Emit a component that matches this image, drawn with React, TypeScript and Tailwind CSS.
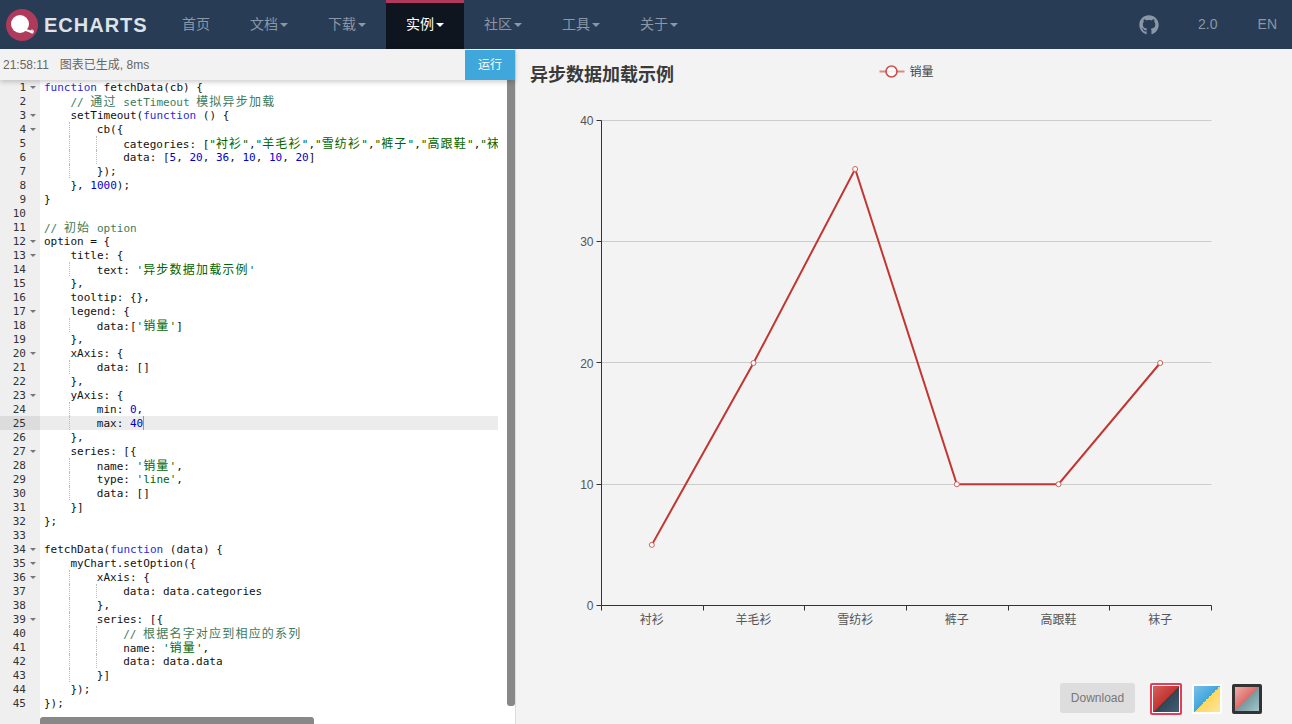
import { Fragment } from "react";
import { FaGithub } from "react-icons/fa";

const code = `function fetchData(cb) {
    // 通过 setTimeout 模拟异步加载
    setTimeout(function () {
        cb({
            categories: ["衬衫","羊毛衫","雪纺衫","裤子","高跟鞋","袜子"],
            data: [5, 20, 36, 10, 10, 20]
        });
    }, 1000);
}

// 初始 option
option = {
    title: {
        text: '异步数据加载示例'
    },
    tooltip: {},
    legend: {
        data:['销量']
    },
    xAxis: {
        data: []
    },
    yAxis: {
        min: 0,
        max: 40
    },
    series: [{
        name: '销量',
        type: 'line',
        data: []
    }]
};

fetchData(function (data) {
    myChart.setOption({
        xAxis: {
            data: data.categories
        },
        series: [{
            // 根据名字对应到相应的系列
            name: '销量',
            data: data.data
        }]
    });
});`.split("\n");

const foldLines = [1, 3, 4, 12, 13, 17, 20, 23, 27, 34, 35, 36, 39];
const activeLine = 25;

const navItems = [
  { label: "首页", caret: false },
  { label: "文档", caret: true },
  { label: "下载", caret: true },
  { label: "实例", caret: true, active: true },
  { label: "社区", caret: true },
  { label: "工具", caret: true },
  { label: "关于", caret: true },
];

const sansFont = "font-['Liberation_Sans','Noto_Sans_CJK_SC',sans-serif]";
const chartFont = "Liberation Sans, Noto Sans CJK SC, sans-serif";

// CJK cells are two columns wide in the editor
function Cells({ text }: { text: string }) {
  const parts = text.split(/([\u4e00-\u9fff]+)/);
  return (
    <>
      {parts.map((p, i) =>
        i % 2 === 1 ? (
          <span key={i} className="text-[12px] tracking-[1.2px]">
            {p}
          </span>
        ) : (
          <Fragment key={i}>{p}</Fragment>
        )
      )}
    </>
  );
}

function CodeText({ text }: { text: string }) {
  const tokens = text.split(/(\/\/.*$|"[^"]*"|'[^']*'|\bfunction\b|\b\d+\b)/);
  return (
    <>
      {tokens.map((t, i) => {
        if (i % 2 === 0) return <Cells key={i} text={t} />;
        let color = "text-[#0000cd]";
        if (t.startsWith("//")) color = "text-[#3d7a5c]";
        else if (t.startsWith('"') || t.startsWith("'")) color = "text-[#006400]";
        else if (t === "function") color = "text-[#2a2ae0]";
        return (
          <span key={i} className={color}>
            <Cells text={t} />
          </span>
        );
      })}
    </>
  );
}

function CodeLine({ text, active }: { text: string; active: boolean }) {
  const spaces = text.length - text.trimStart().length;
  const depth = spaces / 4;
  return (
    <div className={`flex h-[14px] whitespace-pre pl-1 ${active ? "bg-[#ececec]" : ""}`}>
      {Array.from({ length: depth }).map((_, i) => (
        <span
          key={i}
          className={`inline-block h-[14px] w-[26.4px] shrink-0 ${
            i < depth - 1 ? "border-r border-dotted border-[#bbbbbb]" : ""
          }`}
        />
      ))}
      <span className="translate-y-px">
        <CodeText text={text.trimStart()} />
      </span>
      {active && <span className="h-[14px] w-px bg-[#999999]" />}
    </div>
  );
}

function Editor() {
  return (
    <div className="relative flex min-h-0 flex-1 overflow-hidden bg-white font-['DejaVu_Sans_Mono','Noto_Sans_CJK_SC',monospace] text-[11px] leading-[14px] text-[#111111]">
      <div className="w-10 shrink-0 bg-[#efefef] text-[#333333]">
        {code.map((_, i) => {
          const n = i + 1;
          return (
            <div
              key={n}
              className={`flex h-[14px] items-center justify-end pr-[4px] ${
                n === activeLine ? "bg-[#dcdcdc]" : ""
              }`}
            >
              <span className="translate-y-px">{n}</span>
              <span className="ml-[3px] flex w-[7px] justify-center">
                {foldLines.includes(n) && (
                  <span className="h-0 w-0 border-x-[3px] border-t-[3px] border-x-transparent border-t-[#777777]" />
                )}
              </span>
            </div>
          );
        })}
      </div>
      <div className="w-[458px] shrink-0 overflow-hidden">
        {code.map((line, i) => (
          <CodeLine key={i} text={line} active={i + 1 === activeLine} />
        ))}
      </div>
      <div className="ml-[9px] h-[626px] w-2 rounded-b-[3px] bg-[#888888]" />
      <div className="absolute bottom-0 left-10 h-[7px] w-[274px] rounded-t-[3px] bg-[#888888]" />
    </div>
  );
}

function Chart() {
  const data = [
    { name: "衬衫", value: 5 },
    { name: "羊毛衫", value: 20 },
    { name: "雪纺衫", value: 36 },
    { name: "裤子", value: 10 },
    { name: "高跟鞋", value: 10 },
    { name: "袜子", value: 20 },
  ];
  const left = 85.5;
  const right = 695.5;
  const top = 71.5;
  const bottom = 556.5;
  const step = (right - left) / data.length;
  const px = (i: number) => left + step * (i + 0.5) - 0.5;
  const py = (v: number) => bottom - ((bottom - top) * v) / 40;
  // snap axis lines to whole pixels
  const snap = (y: number) => Math.floor(y - 0.01) + 0.5;
  const points = data.map((d, i) => `${px(i)},${py(d.value)}`).join(" ");

  return (
    <svg width="776" height="621" viewBox="0 0 776 621" className="block" fontFamily={chartFont}>
      <text x="14" y="32" fontSize="18" fontWeight="bold" fill="#3a3a3a">
        异步数据加载示例
      </text>
      <line x1="363.5" x2="388.5" y1="22.5" y2="22.5" stroke="#c23531" strokeWidth="2" opacity="0.55" />
      <circle cx="375.5" cy="22.5" r="5.5" fill="#ffffff" stroke="#c23531" strokeWidth="1.5" opacity="0.85" />
      <text x="393.5" y="27" fontSize="12" fill="#444444">
        销量
      </text>

      {[10, 20, 30, 40].map((v) => (
        <line key={v} x1={left} x2={right} y1={snap(py(v))} y2={snap(py(v))} stroke="#cccccc" />
      ))}
      <line x1={left} x2={left} y1={top} y2={bottom} stroke="#333333" />
      <line x1={left} x2={right} y1={bottom} y2={bottom} stroke="#333333" />
      {[0, 10, 20, 30, 40].map((v) => (
        <Fragment key={v}>
          <line x1={left - 5} x2={left} y1={snap(py(v))} y2={snap(py(v))} stroke="#333333" />
          <text x={left - 8} y={py(v) + 4.5} textAnchor="end" fontSize="12" fill="#555555">
            {v}
          </text>
        </Fragment>
      ))}
      {[0, 1, 2, 3, 4, 5, 6].map((i) => {
        const x = Math.floor(left + step * i) + 0.5;
        return <line key={i} x1={x} x2={x} y1={bottom} y2={bottom + 5} stroke="#333333" />;
      })}
      {data.map((d, i) => (
        <text key={d.name} x={px(i)} y={bottom + 18.5} textAnchor="middle" fontSize="12" fill="#555555">
          {d.name}
        </text>
      ))}

      <polyline points={points} fill="none" stroke="#c23531" strokeWidth="2" />
      {data.map((d, i) => (
        <circle key={i} cx={px(i)} cy={py(d.value)} r="2.5" fill="#ffffff" stroke="#d0605c" />
      ))}
    </svg>
  );
}

export default function App() {
  return (
    <div className={`flex h-[724px] w-[1292px] flex-col overflow-hidden ${sansFont}`}>
      <nav className="flex h-[49px] shrink-0 bg-[#293c55] text-[14px] text-[#8a97a6]">
        <div className="flex w-[162px] items-center">
          <div className="ml-[6px] flex h-8 w-8 items-center justify-center rounded-full bg-[#b03a5b]">
            <svg width="32" height="32" viewBox="0 0 32 32">
              <circle cx="14" cy="15" r="9" fill="#ffffff" />
              <path d="M20 21 L27 23.5" stroke="#ffffff" strokeWidth="2" />
              <circle cx="26" cy="22.5" r="1.5" fill="none" stroke="#ffffff" strokeWidth="1" />
            </svg>
          </div>
          <span className="ml-[6px] font-['Liberation_Sans',sans-serif] text-[20px] leading-none font-bold tracking-[1px] text-[#dfe3e7]">
            ECHARTS
          </span>
        </div>
        {navItems.map((item) => (
          <div
            key={item.label}
            className={`flex items-center px-5 ${
              item.active ? "border-t-[3px] border-[#b03a5b] bg-[#0e151f] pb-[3px] text-white" : ""
            }`}
          >
            {item.label}
            {item.caret && (
              <span
                className={`ml-[2px] h-0 w-0 border-x-4 border-t-4 border-x-transparent ${
                  item.active ? "border-t-white" : "border-t-[#8a97a6]"
                }`}
              />
            )}
          </div>
        ))}
        <div className="ml-auto flex items-center">
          <FaGithub className="text-[20px]" />
          <span className="ml-[39px]">2.0</span>
          <span className="ml-[40px] mr-[15px]">EN</span>
        </div>
      </nav>

      <div className="flex min-h-0 flex-1">
        <div className="flex w-[516px] shrink-0 flex-col border-r border-[#dddddd]">
          <div className="relative z-10 flex h-[31px] shrink-0 items-center justify-between bg-[#f2f2f2] text-[12px] text-[#666666] shadow-[0_2px_5px_rgba(0,0,0,0.2)]">
            <div className="flex pl-[3px]">
              <span>21:58:11</span>
              <span className="ml-[11px]">图表已生成, 8ms</span>
            </div>
            <button className="mt-px flex h-[30px] w-[50px] items-center justify-center bg-[#3fa7dc] text-white">
              运行
            </button>
          </div>
          <Editor />
        </div>

        <div className="flex min-w-0 flex-1 flex-col bg-[#f3f3f3]">
          <Chart />
          <div className="flex flex-1 items-start justify-end pr-[30px] pt-[13px]">
            <button className="h-[30px] w-[75px] rounded-[3px] bg-[#dddddd] text-[12px] text-[#777777]">
              Download
            </button>
            <div className="ml-[15px] h-[32px] w-[32px] rounded-[2px] border-2 border-[#e43c59] bg-white p-[1px]">
              <div className="h-full w-full bg-[linear-gradient(to_bottom_right,#d4605c_0%,#c23531_50%,#2f4554_50%,#426078_100%)]" />
            </div>
            <div className="ml-[10px] mt-px h-[30px] w-[30px] rounded-[2px] border-2 border-white bg-[linear-gradient(to_bottom_right,#7cc0e8_0%,#3fa7dc_50%,#fdd85d_50%,#fde5a0_100%)]" />
            <div className="ml-[10px] mt-px h-[30px] w-[30px] rounded-[2px] border-[3px] border-[#333333] bg-[linear-gradient(to_bottom_right,#edafac_0%,#dd6b66_50%,#759aa0_50%,#a6c5c8_100%)]" />
          </div>
        </div>
      </div>
    </div>
  );
}
